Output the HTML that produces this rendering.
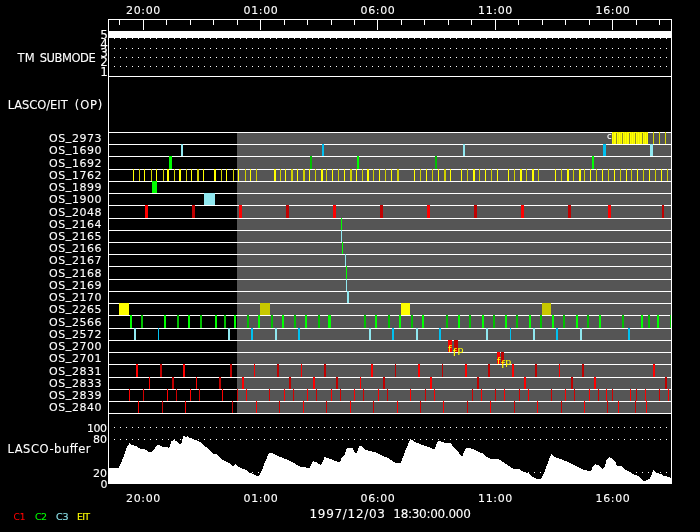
<!DOCTYPE html>
<html><head><meta charset="utf-8"><title>LASCO/EIT plan</title>
<style>
html,body{margin:0;padding:0;background:#000;}
body{width:700px;height:532px;overflow:hidden;}
svg text{stroke-width:0.1px;}svg{display:block;will-change:transform;font-family:'DejaVu Sans','Liberation Sans',sans-serif;}
</style></head><body>
<svg width="700" height="532" viewBox="0 0 700 532" shape-rendering="crispEdges">
<rect x="0" y="0" width="700" height="532" fill="#000"/>
<rect x="237" y="132" width="434" height="282" fill="#555555"/>
<rect x="108" y="132" width="563" height="1" fill="#fff"/>
<rect x="108" y="144" width="563" height="1" fill="#fff"/>
<rect x="108" y="156" width="563" height="1" fill="#fff"/>
<rect x="108" y="169" width="563" height="1" fill="#fff"/>
<rect x="108" y="181" width="563" height="1" fill="#fff"/>
<rect x="108" y="193" width="563" height="1" fill="#fff"/>
<rect x="108" y="205" width="563" height="1" fill="#fff"/>
<rect x="108" y="218" width="563" height="1" fill="#fff"/>
<rect x="108" y="230" width="563" height="1" fill="#fff"/>
<rect x="108" y="242" width="563" height="1" fill="#fff"/>
<rect x="108" y="254" width="563" height="1" fill="#fff"/>
<rect x="108" y="266" width="563" height="1" fill="#fff"/>
<rect x="108" y="279" width="563" height="1" fill="#fff"/>
<rect x="108" y="291" width="563" height="1" fill="#fff"/>
<rect x="108" y="303" width="563" height="1" fill="#fff"/>
<rect x="108" y="315" width="563" height="1" fill="#fff"/>
<rect x="108" y="328" width="563" height="1" fill="#fff"/>
<rect x="108" y="340" width="563" height="1" fill="#fff"/>
<rect x="108" y="352" width="563" height="1" fill="#fff"/>
<rect x="108" y="364" width="563" height="1" fill="#fff"/>
<rect x="108" y="377" width="563" height="1" fill="#fff"/>
<rect x="108" y="389" width="563" height="1" fill="#fff"/>
<rect x="108" y="401" width="563" height="1" fill="#fff"/>
<rect x="108" y="413" width="563" height="1" fill="#fff"/>
<rect x="108" y="19" width="564" height="1" fill="#fff"/>
<rect x="108" y="76" width="564" height="1" fill="#fff"/>
<rect x="108" y="31" width="563" height="7" fill="#fff"/>
<line x1="114" y1="38.5" x2="668" y2="38.5" stroke="#fff" stroke-width="1" stroke-dasharray="1 5"/>
<line x1="114" y1="48.5" x2="668" y2="48.5" stroke="#fff" stroke-width="1" stroke-dasharray="1 5"/>
<line x1="114" y1="57.5" x2="668" y2="57.5" stroke="#fff" stroke-width="1" stroke-dasharray="1 5"/>
<line x1="114" y1="66.5" x2="668" y2="66.5" stroke="#fff" stroke-width="1" stroke-dasharray="1 5"/>
<rect x="119" y="19" width="1" height="6" fill="#fff"/>
<rect x="143" y="19" width="1" height="11" fill="#fff"/>
<rect x="166" y="19" width="1" height="6" fill="#fff"/>
<rect x="190" y="19" width="1" height="6" fill="#fff"/>
<rect x="213" y="19" width="1" height="6" fill="#fff"/>
<rect x="237" y="19" width="1" height="6" fill="#fff"/>
<rect x="260" y="19" width="1" height="11" fill="#fff"/>
<rect x="284" y="19" width="1" height="6" fill="#fff"/>
<rect x="307" y="19" width="1" height="6" fill="#fff"/>
<rect x="331" y="19" width="1" height="6" fill="#fff"/>
<rect x="354" y="19" width="1" height="6" fill="#fff"/>
<rect x="377" y="19" width="1" height="11" fill="#fff"/>
<rect x="401" y="19" width="1" height="6" fill="#fff"/>
<rect x="424" y="19" width="1" height="6" fill="#fff"/>
<rect x="448" y="19" width="1" height="6" fill="#fff"/>
<rect x="471" y="19" width="1" height="6" fill="#fff"/>
<rect x="495" y="19" width="1" height="11" fill="#fff"/>
<rect x="518" y="19" width="1" height="6" fill="#fff"/>
<rect x="542" y="19" width="1" height="6" fill="#fff"/>
<rect x="565" y="19" width="1" height="6" fill="#fff"/>
<rect x="589" y="19" width="1" height="6" fill="#fff"/>
<rect x="612" y="19" width="1" height="11" fill="#fff"/>
<rect x="636" y="19" width="1" height="6" fill="#fff"/>
<rect x="659" y="19" width="1" height="6" fill="#fff"/>
<rect x="612" y="132" width="36" height="12" fill="#ffff00"/>
<rect x="616" y="133" width="1" height="11" fill="#8c8c28"/>
<rect x="622" y="133" width="1" height="11" fill="#8c8c28"/>
<rect x="629" y="133" width="1" height="11" fill="#8c8c28"/>
<rect x="635" y="133" width="1" height="11" fill="#8c8c28"/>
<rect x="642" y="133" width="1" height="11" fill="#8c8c28"/>
<rect x="613" y="132" width="1" height="12" fill="#ecec00"/>
<rect x="618" y="132" width="1" height="12" fill="#ecec00"/>
<rect x="620" y="132" width="1" height="12" fill="#ecec00"/>
<rect x="624" y="132" width="1" height="12" fill="#ecec00"/>
<rect x="626" y="132" width="1" height="12" fill="#ecec00"/>
<rect x="631" y="132" width="1" height="12" fill="#ecec00"/>
<rect x="633" y="132" width="1" height="12" fill="#ecec00"/>
<rect x="637" y="132" width="1" height="12" fill="#ecec00"/>
<rect x="639" y="132" width="1" height="12" fill="#ecec00"/>
<rect x="644" y="132" width="1" height="12" fill="#ecec00"/>
<rect x="646" y="132" width="1" height="12" fill="#ecec00"/>
<rect x="653" y="132" width="1" height="12" fill="#d8d800"/>
<rect x="659" y="132" width="1" height="12" fill="#d8d800"/>
<rect x="665" y="132" width="1" height="12" fill="#d8d800"/>
<rect x="181" y="144" width="2" height="12" fill="#90e8f0"/>
<rect x="322" y="144" width="2" height="12" fill="#00c0f0"/>
<rect x="463" y="144" width="2" height="12" fill="#90e8f0"/>
<rect x="603" y="144" width="3" height="12" fill="#00c0f0"/>
<rect x="650" y="144" width="3" height="12" fill="#90e8f0"/>
<rect x="169" y="156" width="3" height="13" fill="#00ff00"/>
<rect x="310" y="156" width="2" height="13" fill="#00c000"/>
<rect x="357" y="156" width="2" height="13" fill="#00ff00"/>
<rect x="435" y="156" width="2" height="13" fill="#00c000"/>
<rect x="592" y="156" width="2" height="13" fill="#00ff00"/>
<rect x="133" y="169" width="1" height="12" fill="#ffff00"/>
<rect x="139" y="169" width="1" height="12" fill="#d0d000"/>
<rect x="144" y="169" width="1" height="12" fill="#ffff00"/>
<rect x="151" y="169" width="1" height="12" fill="#d0d000"/>
<rect x="156" y="169" width="1" height="12" fill="#ffff00"/>
<rect x="163" y="169" width="1" height="12" fill="#d0d000"/>
<rect x="167" y="169" width="2" height="12" fill="#ffff00"/>
<rect x="174" y="169" width="1" height="12" fill="#d0d000"/>
<rect x="179" y="169" width="2" height="12" fill="#ffff00"/>
<rect x="186" y="169" width="1" height="12" fill="#d0d000"/>
<rect x="191" y="169" width="1" height="12" fill="#ffff00"/>
<rect x="197" y="169" width="2" height="12" fill="#d0d000"/>
<rect x="203" y="169" width="1" height="12" fill="#ffff00"/>
<rect x="214" y="169" width="2" height="12" fill="#ffff00"/>
<rect x="221" y="169" width="1" height="12" fill="#d0d000"/>
<rect x="226" y="169" width="1" height="12" fill="#ffff00"/>
<rect x="233" y="169" width="1" height="12" fill="#d0d000"/>
<rect x="238" y="169" width="1" height="12" fill="#ffff00"/>
<rect x="245" y="169" width="1" height="12" fill="#d0d000"/>
<rect x="250" y="169" width="1" height="12" fill="#ffff00"/>
<rect x="256" y="169" width="1" height="12" fill="#d0d000"/>
<rect x="274" y="169" width="2" height="12" fill="#ffff00"/>
<rect x="280" y="169" width="1" height="12" fill="#d0d000"/>
<rect x="285" y="169" width="1" height="12" fill="#ffff00"/>
<rect x="291" y="169" width="2" height="12" fill="#d0d000"/>
<rect x="297" y="169" width="1" height="12" fill="#ffff00"/>
<rect x="303" y="169" width="2" height="12" fill="#d0d000"/>
<rect x="309" y="169" width="1" height="12" fill="#ffff00"/>
<rect x="315" y="169" width="1" height="12" fill="#d0d000"/>
<rect x="321" y="169" width="2" height="12" fill="#ffff00"/>
<rect x="326" y="169" width="1" height="12" fill="#d0d000"/>
<rect x="332" y="169" width="1" height="12" fill="#ffff00"/>
<rect x="338" y="169" width="1" height="12" fill="#d0d000"/>
<rect x="344" y="169" width="1" height="12" fill="#ffff00"/>
<rect x="350" y="169" width="2" height="12" fill="#d0d000"/>
<rect x="356" y="169" width="1" height="12" fill="#ffff00"/>
<rect x="362" y="169" width="1" height="12" fill="#d0d000"/>
<rect x="367" y="169" width="2" height="12" fill="#ffff00"/>
<rect x="373" y="169" width="1" height="12" fill="#d0d000"/>
<rect x="379" y="169" width="1" height="12" fill="#ffff00"/>
<rect x="385" y="169" width="1" height="12" fill="#d0d000"/>
<rect x="391" y="169" width="1" height="12" fill="#ffff00"/>
<rect x="397" y="169" width="2" height="12" fill="#d0d000"/>
<rect x="414" y="169" width="1" height="12" fill="#ffff00"/>
<rect x="420" y="169" width="1" height="12" fill="#d0d000"/>
<rect x="426" y="169" width="1" height="12" fill="#ffff00"/>
<rect x="432" y="169" width="1" height="12" fill="#d0d000"/>
<rect x="438" y="169" width="1" height="12" fill="#ffff00"/>
<rect x="444" y="169" width="2" height="12" fill="#d0d000"/>
<rect x="450" y="169" width="1" height="12" fill="#ffff00"/>
<rect x="461" y="169" width="1" height="12" fill="#ffff00"/>
<rect x="467" y="169" width="1" height="12" fill="#d0d000"/>
<rect x="473" y="169" width="2" height="12" fill="#ffff00"/>
<rect x="479" y="169" width="1" height="12" fill="#d0d000"/>
<rect x="485" y="169" width="1" height="12" fill="#ffff00"/>
<rect x="491" y="169" width="1" height="12" fill="#d0d000"/>
<rect x="497" y="169" width="1" height="12" fill="#ffff00"/>
<rect x="508" y="169" width="1" height="12" fill="#ffff00"/>
<rect x="514" y="169" width="1" height="12" fill="#d0d000"/>
<rect x="520" y="169" width="2" height="12" fill="#ffff00"/>
<rect x="526" y="169" width="1" height="12" fill="#d0d000"/>
<rect x="532" y="169" width="2" height="12" fill="#ffff00"/>
<rect x="538" y="169" width="1" height="12" fill="#d0d000"/>
<rect x="555" y="169" width="1" height="12" fill="#ffff00"/>
<rect x="561" y="169" width="1" height="12" fill="#d0d000"/>
<rect x="567" y="169" width="2" height="12" fill="#ffff00"/>
<rect x="573" y="169" width="1" height="12" fill="#d0d000"/>
<rect x="579" y="169" width="2" height="12" fill="#ffff00"/>
<rect x="584" y="169" width="1" height="12" fill="#d0d000"/>
<rect x="590" y="169" width="1" height="12" fill="#ffff00"/>
<rect x="596" y="169" width="1" height="12" fill="#d0d000"/>
<rect x="602" y="169" width="1" height="12" fill="#ffff00"/>
<rect x="608" y="169" width="1" height="12" fill="#d0d000"/>
<rect x="614" y="169" width="1" height="12" fill="#ffff00"/>
<rect x="620" y="169" width="1" height="12" fill="#d0d000"/>
<rect x="626" y="169" width="1" height="12" fill="#ffff00"/>
<rect x="631" y="169" width="1" height="12" fill="#d0d000"/>
<rect x="637" y="169" width="1" height="12" fill="#ffff00"/>
<rect x="643" y="169" width="1" height="12" fill="#d0d000"/>
<rect x="649" y="169" width="1" height="12" fill="#ffff00"/>
<rect x="655" y="169" width="1" height="12" fill="#d0d000"/>
<rect x="661" y="169" width="1" height="12" fill="#ffff00"/>
<rect x="667" y="169" width="1" height="12" fill="#d0d000"/>
<rect x="152" y="181" width="5" height="12" fill="#00ff00"/>
<rect x="204" y="193" width="11" height="12" fill="#90e8f0"/>
<rect x="145" y="205" width="3" height="13" fill="#ff0000"/>
<rect x="192" y="205" width="3" height="13" fill="#c00000"/>
<rect x="239" y="205" width="3" height="13" fill="#ff0000"/>
<rect x="286" y="205" width="3" height="13" fill="#c00000"/>
<rect x="333" y="205" width="3" height="13" fill="#ff0000"/>
<rect x="380" y="205" width="3" height="13" fill="#c00000"/>
<rect x="427" y="205" width="3" height="13" fill="#ff0000"/>
<rect x="474" y="205" width="3" height="13" fill="#c00000"/>
<rect x="521" y="205" width="3" height="13" fill="#ff0000"/>
<rect x="568" y="205" width="3" height="13" fill="#c00000"/>
<rect x="608" y="205" width="3" height="13" fill="#ff0000"/>
<rect x="662" y="205" width="2" height="13" fill="#c00000"/>
<rect x="341" y="218" width="1" height="12" fill="#00ff00"/>
<rect x="341" y="230" width="1" height="12" fill="#90e8f0"/>
<rect x="342" y="242" width="1" height="12" fill="#00ff00"/>
<rect x="345" y="254" width="1" height="12" fill="#90e8f0"/>
<rect x="346" y="266" width="1" height="13" fill="#00ff00"/>
<rect x="346" y="279" width="1" height="12" fill="#90e8f0"/>
<rect x="347" y="291" width="2" height="12" fill="#90e8f0"/>
<rect x="119" y="303" width="10" height="12" fill="#ffff00"/>
<rect x="260" y="303" width="10" height="12" fill="#c8c800"/>
<rect x="401" y="303" width="9" height="12" fill="#ffff00"/>
<rect x="542" y="303" width="9" height="12" fill="#c8c800"/>
<rect x="130" y="315" width="2" height="13" fill="#00ff00"/>
<rect x="141" y="315" width="2" height="13" fill="#00c000"/>
<rect x="164" y="315" width="2" height="13" fill="#00ff00"/>
<rect x="177" y="315" width="2" height="13" fill="#00c000"/>
<rect x="188" y="315" width="2" height="13" fill="#00ff00"/>
<rect x="200" y="315" width="2" height="13" fill="#00c000"/>
<rect x="215" y="315" width="2" height="13" fill="#00ff00"/>
<rect x="224" y="315" width="2" height="13" fill="#00c000"/>
<rect x="234" y="315" width="2" height="13" fill="#00ff00"/>
<rect x="247" y="315" width="2" height="13" fill="#00c000"/>
<rect x="258" y="315" width="2" height="13" fill="#00ff00"/>
<rect x="271" y="315" width="2" height="13" fill="#00c000"/>
<rect x="282" y="315" width="2" height="13" fill="#00ff00"/>
<rect x="294" y="315" width="2" height="13" fill="#00c000"/>
<rect x="305" y="315" width="2" height="13" fill="#00ff00"/>
<rect x="318" y="315" width="2" height="13" fill="#00c000"/>
<rect x="328" y="315" width="3" height="13" fill="#00ff00"/>
<rect x="364" y="315" width="2" height="13" fill="#00c000"/>
<rect x="375" y="315" width="2" height="13" fill="#00ff00"/>
<rect x="388" y="315" width="2" height="13" fill="#00c000"/>
<rect x="399" y="315" width="2" height="13" fill="#00ff00"/>
<rect x="411" y="315" width="2" height="13" fill="#00c000"/>
<rect x="422" y="315" width="2" height="13" fill="#00ff00"/>
<rect x="446" y="315" width="2" height="13" fill="#00c000"/>
<rect x="458" y="315" width="2" height="13" fill="#00ff00"/>
<rect x="469" y="315" width="2" height="13" fill="#00c000"/>
<rect x="482" y="315" width="2" height="13" fill="#00ff00"/>
<rect x="493" y="315" width="2" height="13" fill="#00c000"/>
<rect x="505" y="315" width="2" height="13" fill="#00ff00"/>
<rect x="516" y="315" width="2" height="13" fill="#00c000"/>
<rect x="529" y="315" width="2" height="13" fill="#00ff00"/>
<rect x="540" y="315" width="2" height="13" fill="#00c000"/>
<rect x="552" y="315" width="2" height="13" fill="#00ff00"/>
<rect x="563" y="315" width="2" height="13" fill="#00c000"/>
<rect x="576" y="315" width="2" height="13" fill="#00ff00"/>
<rect x="587" y="315" width="2" height="13" fill="#00c000"/>
<rect x="599" y="315" width="2" height="13" fill="#00ff00"/>
<rect x="622" y="315" width="2" height="13" fill="#00c000"/>
<rect x="641" y="315" width="2" height="13" fill="#00ff00"/>
<rect x="648" y="315" width="2" height="13" fill="#00c000"/>
<rect x="657" y="315" width="2" height="13" fill="#00ff00"/>
<rect x="670" y="315" width="1" height="13" fill="#00c000"/>
<rect x="134" y="328" width="2" height="12" fill="#90e8f0"/>
<rect x="158" y="328" width="1" height="12" fill="#00c0f0"/>
<rect x="228" y="328" width="2" height="12" fill="#90e8f0"/>
<rect x="251" y="328" width="2" height="12" fill="#00c0f0"/>
<rect x="275" y="328" width="2" height="12" fill="#90e8f0"/>
<rect x="298" y="328" width="2" height="12" fill="#00c0f0"/>
<rect x="369" y="328" width="2" height="12" fill="#90e8f0"/>
<rect x="392" y="328" width="2" height="12" fill="#00c0f0"/>
<rect x="416" y="328" width="2" height="12" fill="#90e8f0"/>
<rect x="439" y="328" width="2" height="12" fill="#00c0f0"/>
<rect x="486" y="328" width="2" height="12" fill="#90e8f0"/>
<rect x="510" y="328" width="1" height="12" fill="#00c0f0"/>
<rect x="533" y="328" width="2" height="12" fill="#90e8f0"/>
<rect x="556" y="328" width="2" height="12" fill="#00c0f0"/>
<rect x="580" y="328" width="2" height="12" fill="#90e8f0"/>
<rect x="628" y="328" width="2" height="12" fill="#00c0f0"/>
<rect x="448" y="340" width="4" height="12" fill="#ff0000"/>
<rect x="454" y="340" width="4" height="12" fill="#c00000"/>
<rect x="497" y="352" width="3" height="12" fill="#ff0000"/>
<rect x="501" y="352" width="3" height="12" fill="#c00000"/>
<rect x="136" y="364" width="2" height="13" fill="#ff0000"/>
<rect x="160" y="364" width="2" height="13" fill="#c00000"/>
<rect x="183" y="364" width="2" height="13" fill="#ff0000"/>
<rect x="230" y="364" width="2" height="13" fill="#c00000"/>
<rect x="254" y="364" width="1" height="13" fill="#ff0000"/>
<rect x="277" y="364" width="2" height="13" fill="#c00000"/>
<rect x="301" y="364" width="1" height="13" fill="#ff0000"/>
<rect x="324" y="364" width="2" height="13" fill="#c00000"/>
<rect x="371" y="364" width="2" height="13" fill="#ff0000"/>
<rect x="395" y="364" width="1" height="13" fill="#c00000"/>
<rect x="418" y="364" width="2" height="13" fill="#ff0000"/>
<rect x="442" y="364" width="1" height="13" fill="#c00000"/>
<rect x="465" y="364" width="2" height="13" fill="#ff0000"/>
<rect x="488" y="364" width="2" height="13" fill="#c00000"/>
<rect x="512" y="364" width="2" height="13" fill="#ff0000"/>
<rect x="535" y="364" width="2" height="13" fill="#c00000"/>
<rect x="559" y="364" width="1" height="13" fill="#ff0000"/>
<rect x="582" y="364" width="2" height="13" fill="#c00000"/>
<rect x="653" y="364" width="2" height="13" fill="#ff0000"/>
<rect x="149" y="377" width="1" height="12" fill="#ff0000"/>
<rect x="172" y="377" width="2" height="12" fill="#c00000"/>
<rect x="196" y="377" width="1" height="12" fill="#ff0000"/>
<rect x="219" y="377" width="2" height="12" fill="#c00000"/>
<rect x="242" y="377" width="2" height="12" fill="#ff0000"/>
<rect x="289" y="377" width="2" height="12" fill="#c00000"/>
<rect x="313" y="377" width="2" height="12" fill="#ff0000"/>
<rect x="336" y="377" width="2" height="12" fill="#c00000"/>
<rect x="360" y="377" width="1" height="12" fill="#ff0000"/>
<rect x="383" y="377" width="2" height="12" fill="#c00000"/>
<rect x="430" y="377" width="2" height="12" fill="#ff0000"/>
<rect x="477" y="377" width="2" height="12" fill="#c00000"/>
<rect x="524" y="377" width="2" height="12" fill="#ff0000"/>
<rect x="571" y="377" width="2" height="12" fill="#c00000"/>
<rect x="594" y="377" width="2" height="12" fill="#ff0000"/>
<rect x="665" y="377" width="2" height="12" fill="#c00000"/>
<rect x="129" y="389" width="1" height="12" fill="#ff0000"/>
<rect x="143" y="389" width="1" height="12" fill="#d00000"/>
<rect x="167" y="389" width="1" height="12" fill="#ff0000"/>
<rect x="176" y="389" width="1" height="12" fill="#d00000"/>
<rect x="190" y="389" width="1" height="12" fill="#ff0000"/>
<rect x="199" y="389" width="1" height="12" fill="#d00000"/>
<rect x="222" y="389" width="1" height="12" fill="#ff0000"/>
<rect x="237" y="389" width="1" height="12" fill="#d00000"/>
<rect x="246" y="389" width="1" height="12" fill="#ff0000"/>
<rect x="269" y="389" width="1" height="12" fill="#d00000"/>
<rect x="284" y="389" width="1" height="12" fill="#ff0000"/>
<rect x="293" y="389" width="1" height="12" fill="#d00000"/>
<rect x="307" y="389" width="1" height="12" fill="#ff0000"/>
<rect x="316" y="389" width="1" height="12" fill="#d00000"/>
<rect x="331" y="389" width="1" height="12" fill="#ff0000"/>
<rect x="340" y="389" width="1" height="12" fill="#d00000"/>
<rect x="354" y="389" width="1" height="12" fill="#ff0000"/>
<rect x="363" y="389" width="1" height="12" fill="#d00000"/>
<rect x="378" y="389" width="1" height="12" fill="#ff0000"/>
<rect x="387" y="389" width="1" height="12" fill="#d00000"/>
<rect x="410" y="389" width="1" height="12" fill="#ff0000"/>
<rect x="425" y="389" width="1" height="12" fill="#d00000"/>
<rect x="434" y="389" width="1" height="12" fill="#ff0000"/>
<rect x="472" y="389" width="1" height="12" fill="#d00000"/>
<rect x="481" y="389" width="1" height="12" fill="#ff0000"/>
<rect x="495" y="389" width="1" height="12" fill="#d00000"/>
<rect x="504" y="389" width="1" height="12" fill="#ff0000"/>
<rect x="519" y="389" width="1" height="12" fill="#d00000"/>
<rect x="528" y="389" width="1" height="12" fill="#ff0000"/>
<rect x="551" y="389" width="1" height="12" fill="#d00000"/>
<rect x="565" y="389" width="1" height="12" fill="#ff0000"/>
<rect x="574" y="389" width="1" height="12" fill="#d00000"/>
<rect x="589" y="389" width="1" height="12" fill="#ff0000"/>
<rect x="598" y="389" width="1" height="12" fill="#d00000"/>
<rect x="606" y="389" width="1" height="12" fill="#ff0000"/>
<rect x="612" y="389" width="1" height="12" fill="#d00000"/>
<rect x="630" y="389" width="1" height="12" fill="#ff0000"/>
<rect x="636" y="389" width="1" height="12" fill="#d00000"/>
<rect x="645" y="389" width="1" height="12" fill="#ff0000"/>
<rect x="659" y="389" width="1" height="12" fill="#d00000"/>
<rect x="668" y="389" width="1" height="12" fill="#ff0000"/>
<rect x="138" y="401" width="1" height="12" fill="#ff0000"/>
<rect x="162" y="401" width="1" height="12" fill="#d00000"/>
<rect x="185" y="401" width="1" height="12" fill="#ff0000"/>
<rect x="232" y="401" width="1" height="12" fill="#d00000"/>
<rect x="256" y="401" width="1" height="12" fill="#ff0000"/>
<rect x="279" y="401" width="1" height="12" fill="#d00000"/>
<rect x="303" y="401" width="1" height="12" fill="#ff0000"/>
<rect x="326" y="401" width="1" height="12" fill="#d00000"/>
<rect x="350" y="401" width="1" height="12" fill="#ff0000"/>
<rect x="373" y="401" width="1" height="12" fill="#d00000"/>
<rect x="397" y="401" width="1" height="12" fill="#ff0000"/>
<rect x="420" y="401" width="1" height="12" fill="#d00000"/>
<rect x="443" y="401" width="1" height="12" fill="#ff0000"/>
<rect x="467" y="401" width="1" height="12" fill="#d00000"/>
<rect x="490" y="401" width="1" height="12" fill="#ff0000"/>
<rect x="514" y="401" width="1" height="12" fill="#d00000"/>
<rect x="537" y="401" width="1" height="12" fill="#ff0000"/>
<rect x="561" y="401" width="1" height="12" fill="#d00000"/>
<rect x="584" y="401" width="1" height="12" fill="#ff0000"/>
<rect x="607" y="401" width="1" height="12" fill="#d00000"/>
<rect x="618" y="401" width="1" height="12" fill="#ff0000"/>
<rect x="635" y="401" width="1" height="12" fill="#d00000"/>
<rect x="646" y="401" width="1" height="12" fill="#ff0000"/>
<line x1="114" y1="427.5" x2="668" y2="427.5" stroke="#fff" stroke-width="1" stroke-dasharray="1 5"/>
<line x1="114" y1="439.5" x2="668" y2="439.5" stroke="#fff" stroke-width="1" stroke-dasharray="1 5"/>
<line x1="114" y1="472.5" x2="668" y2="472.5" stroke="#fff" stroke-width="1" stroke-dasharray="1 5"/>
<polygon points="108,484 108,467.6 109,467.6 118.6,467.6 121,463 124,456 127,447 129.4,443.4 132,445 137,446.6 139,448.4 144,449 148,451.4 151.4,452.4 154,449.4 157,445.4 159.4,445 162,446.6 166,446.6 169,448 171.4,441 174,440 177.4,442 181,444.6 183.4,436 186,437 187.4,436 190,438 193,439 198,441 202,443.4 206,447 210,451 214,454.4 217,454 220,458 225,461 230,463.6 233,466 235,464 238,466.6 243,469 245,469.4 250,473 253,474 256,475.6 259.4,475.6 262,470 265,462 267.6,456 269.6,452.4 273,453.6 278,456 283,458 288,460 293,462.6 297,465 302,467.4 305,467 309,468.6 311,465 313,461 317,462.6 321,465.4 323,461 324.4,457 328,458 333,460 340,462.6 342,457 345,454 347,447.6 352,447.6 354,451 356.4,453.6 359,446.4 362,446.4 366,450 372,451.6 375,452 381,455 387,457.6 392,460.6 396,463.4 400.6,463 403,457 406,449 408.6,443 410.6,439 415,442 420,444 427,446.4 434.6,449.4 436,445 438,441 442,441.6 445,443.4 451,443 454,448 459,453 462.4,456.6 464,452 466,448.4 471,448.4 477,451 483,453.6 487,457 491,459 499,459.4 503,462 508,465.4 510,466.6 513,468.6 518,468.6 523,471.4 528,473 532,476.4 537,479.4 541,478.6 544,473 547,465 549.4,458 551.4,454.4 555,457 562,459.4 569,462.6 576,466 583,469.6 591,471.6 593,466 595,464 599,465.4 603,469 605,465.7 606.4,460 609.3,457 612,458.6 615,461 617,465.7 621.4,466 625.7,470 630,472 634.3,475 638,475.7 641.4,479 644.3,481.4 647,480 650,478.6 651.4,475 653.6,470 656.4,472.9 661.4,474.3 664.3,476 669.3,477 671,478.6 671,484" fill="#fff"/>
<rect x="108" y="19" width="1" height="465" fill="#fff"/>
<rect x="671" y="19" width="1" height="465" fill="#fff"/>
<text x="126" y="14" font-size="11" text-anchor="start" fill="#fff" stroke="#fff" textLength="34.3" lengthAdjust="spacing">20:00</text>
<text x="126" y="502" font-size="11" text-anchor="start" fill="#fff" stroke="#fff" textLength="34.3" lengthAdjust="spacing">20:00</text>
<text x="243.5" y="14" font-size="11" text-anchor="start" fill="#fff" stroke="#fff" textLength="34.3" lengthAdjust="spacing">01:00</text>
<text x="243.5" y="502" font-size="11" text-anchor="start" fill="#fff" stroke="#fff" textLength="34.3" lengthAdjust="spacing">01:00</text>
<text x="360.5" y="14" font-size="11" text-anchor="start" fill="#fff" stroke="#fff" textLength="34.3" lengthAdjust="spacing">06:00</text>
<text x="360.5" y="502" font-size="11" text-anchor="start" fill="#fff" stroke="#fff" textLength="34.3" lengthAdjust="spacing">06:00</text>
<text x="478" y="14" font-size="11" text-anchor="start" fill="#fff" stroke="#fff" textLength="34.3" lengthAdjust="spacing">11:00</text>
<text x="478" y="502" font-size="11" text-anchor="start" fill="#fff" stroke="#fff" textLength="34.3" lengthAdjust="spacing">11:00</text>
<text x="595.5" y="14" font-size="11" text-anchor="start" fill="#fff" stroke="#fff" textLength="34.3" lengthAdjust="spacing">16:00</text>
<text x="595.5" y="502" font-size="11" text-anchor="start" fill="#fff" stroke="#fff" textLength="34.3" lengthAdjust="spacing">16:00</text>
<text y="62" font-size="11.5" fill="#fff" stroke="#fff"><tspan x="17.6" textLength="17.2" lengthAdjust="spacing">TM</tspan> <tspan x="39.7" textLength="56" lengthAdjust="spacing">SUBMODE</tspan></text>
<text y="109" font-size="11.5" fill="#fff" stroke="#fff"><tspan x="7.7" textLength="60" lengthAdjust="spacing">LASCO/EIT</tspan> <tspan x="74.8" textLength="27.5" lengthAdjust="spacing">(OP)</tspan></text>
<text x="107.8" y="38.5" font-size="12" text-anchor="end" fill="#fff" stroke="#fff">5</text>
<text x="107.8" y="48.0" font-size="12" text-anchor="end" fill="#fff" stroke="#fff">4</text>
<text x="107.8" y="57.0" font-size="12" text-anchor="end" fill="#fff" stroke="#fff">3</text>
<text x="107.8" y="66.0" font-size="12" text-anchor="end" fill="#fff" stroke="#fff">2</text>
<text x="107.8" y="75.5" font-size="12" text-anchor="end" fill="#fff" stroke="#fff">1</text>
<text x="49" y="142.3" font-size="11" text-anchor="start" fill="#fff" stroke="#fff" textLength="52.6" lengthAdjust="spacing">OS<tspan dy="-2">_</tspan><tspan dy="2">2973</tspan></text>
<text x="49" y="154.3" font-size="11" text-anchor="start" fill="#fff" stroke="#fff" textLength="52.6" lengthAdjust="spacing">OS<tspan dy="-2">_</tspan><tspan dy="2">1690</tspan></text>
<text x="49" y="166.8" font-size="11" text-anchor="start" fill="#fff" stroke="#fff" textLength="52.6" lengthAdjust="spacing">OS<tspan dy="-2">_</tspan><tspan dy="2">1692</tspan></text>
<text x="49" y="179.3" font-size="11" text-anchor="start" fill="#fff" stroke="#fff" textLength="52.6" lengthAdjust="spacing">OS<tspan dy="-2">_</tspan><tspan dy="2">1762</tspan></text>
<text x="49" y="191.3" font-size="11" text-anchor="start" fill="#fff" stroke="#fff" textLength="52.6" lengthAdjust="spacing">OS<tspan dy="-2">_</tspan><tspan dy="2">1899</tspan></text>
<text x="49" y="203.3" font-size="11" text-anchor="start" fill="#fff" stroke="#fff" textLength="52.6" lengthAdjust="spacing">OS<tspan dy="-2">_</tspan><tspan dy="2">1900</tspan></text>
<text x="49" y="215.8" font-size="11" text-anchor="start" fill="#fff" stroke="#fff" textLength="52.6" lengthAdjust="spacing">OS<tspan dy="-2">_</tspan><tspan dy="2">2048</tspan></text>
<text x="49" y="228.3" font-size="11" text-anchor="start" fill="#fff" stroke="#fff" textLength="52.6" lengthAdjust="spacing">OS<tspan dy="-2">_</tspan><tspan dy="2">2164</tspan></text>
<text x="49" y="240.3" font-size="11" text-anchor="start" fill="#fff" stroke="#fff" textLength="52.6" lengthAdjust="spacing">OS<tspan dy="-2">_</tspan><tspan dy="2">2165</tspan></text>
<text x="49" y="252.3" font-size="11" text-anchor="start" fill="#fff" stroke="#fff" textLength="52.6" lengthAdjust="spacing">OS<tspan dy="-2">_</tspan><tspan dy="2">2166</tspan></text>
<text x="49" y="264.3" font-size="11" text-anchor="start" fill="#fff" stroke="#fff" textLength="52.6" lengthAdjust="spacing">OS<tspan dy="-2">_</tspan><tspan dy="2">2167</tspan></text>
<text x="49" y="276.8" font-size="11" text-anchor="start" fill="#fff" stroke="#fff" textLength="52.6" lengthAdjust="spacing">OS<tspan dy="-2">_</tspan><tspan dy="2">2168</tspan></text>
<text x="49" y="289.3" font-size="11" text-anchor="start" fill="#fff" stroke="#fff" textLength="52.6" lengthAdjust="spacing">OS<tspan dy="-2">_</tspan><tspan dy="2">2169</tspan></text>
<text x="49" y="301.3" font-size="11" text-anchor="start" fill="#fff" stroke="#fff" textLength="52.6" lengthAdjust="spacing">OS<tspan dy="-2">_</tspan><tspan dy="2">2170</tspan></text>
<text x="49" y="313.3" font-size="11" text-anchor="start" fill="#fff" stroke="#fff" textLength="52.6" lengthAdjust="spacing">OS<tspan dy="-2">_</tspan><tspan dy="2">2265</tspan></text>
<text x="49" y="325.8" font-size="11" text-anchor="start" fill="#fff" stroke="#fff" textLength="52.6" lengthAdjust="spacing">OS<tspan dy="-2">_</tspan><tspan dy="2">2566</tspan></text>
<text x="49" y="338.3" font-size="11" text-anchor="start" fill="#fff" stroke="#fff" textLength="52.6" lengthAdjust="spacing">OS<tspan dy="-2">_</tspan><tspan dy="2">2572</tspan></text>
<text x="49" y="350.3" font-size="11" text-anchor="start" fill="#fff" stroke="#fff" textLength="52.6" lengthAdjust="spacing">OS<tspan dy="-2">_</tspan><tspan dy="2">2700</tspan></text>
<text x="49" y="362.3" font-size="11" text-anchor="start" fill="#fff" stroke="#fff" textLength="52.6" lengthAdjust="spacing">OS<tspan dy="-2">_</tspan><tspan dy="2">2701</tspan></text>
<text x="49" y="374.8" font-size="11" text-anchor="start" fill="#fff" stroke="#fff" textLength="52.6" lengthAdjust="spacing">OS<tspan dy="-2">_</tspan><tspan dy="2">2831</tspan></text>
<text x="49" y="387.3" font-size="11" text-anchor="start" fill="#fff" stroke="#fff" textLength="52.6" lengthAdjust="spacing">OS<tspan dy="-2">_</tspan><tspan dy="2">2833</tspan></text>
<text x="49" y="399.3" font-size="11" text-anchor="start" fill="#fff" stroke="#fff" textLength="52.6" lengthAdjust="spacing">OS<tspan dy="-2">_</tspan><tspan dy="2">2839</tspan></text>
<text x="49" y="411.3" font-size="11" text-anchor="start" fill="#fff" stroke="#fff" textLength="52.6" lengthAdjust="spacing">OS<tspan dy="-2">_</tspan><tspan dy="2">2840</tspan></text>
<text x="87" y="431.5" font-size="11" text-anchor="start" fill="#fff" stroke="#fff" textLength="20" lengthAdjust="spacing">100</text>
<text x="93" y="442.8" font-size="11" text-anchor="start" fill="#fff" stroke="#fff" textLength="14" lengthAdjust="spacing">80</text>
<text x="93" y="476.5" font-size="11" text-anchor="start" fill="#fff" stroke="#fff" textLength="14" lengthAdjust="spacing">20</text>
<text x="100.5" y="487.8" font-size="11" text-anchor="start" fill="#fff" stroke="#fff">0</text>
<text x="7.5" y="452.5" font-size="11.5" text-anchor="start" fill="#fff" stroke="#fff" textLength="83" lengthAdjust="spacing">LASCO-buffer</text>
<text y="518" font-size="12" fill="#fff" stroke="#fff"><tspan x="309.5" textLength="75.5" lengthAdjust="spacing">1997/12/03</tspan> <tspan x="393.3" textLength="77.5" lengthAdjust="spacing">18:30:00.000</tspan></text>
<text x="13.5" y="520" font-size="9" text-anchor="start" fill="#ff0000" stroke="#ff0000">C1</text>
<text x="35" y="520" font-size="9.5" text-anchor="start" fill="#00ff00" stroke="#00ff00" textLength="12" lengthAdjust="spacing">C2</text>
<text x="56" y="520" font-size="9.5" text-anchor="start" fill="#90e8f0" stroke="#90e8f0" textLength="12.5" lengthAdjust="spacing">C3</text>
<text x="77" y="520" font-size="9.5" text-anchor="start" fill="#ffff00" stroke="#ffff00" textLength="13" lengthAdjust="spacing">EIT</text>
<text x="607" y="139" font-size="8.5" text-anchor="start" fill="#fff" stroke="#fff">c</text>
<text x="448" y="352" font-size="9.5" text-anchor="start" fill="#ffff00" stroke="#ffff00" textLength="4" lengthAdjust="spacing">f</text>
<text x="452.8" y="356" font-size="11" text-anchor="start" fill="#ffff00" stroke="#ffff00" textLength="4.2" lengthAdjust="spacing">f</text>
<text x="457.6" y="352.7" font-size="9.5" text-anchor="start" fill="#ffff00" stroke="#ffff00">p</text>
<text x="497" y="364" font-size="9.5" text-anchor="start" fill="#ffff00" stroke="#ffff00" textLength="4" lengthAdjust="spacing">f</text>
<text x="501.0" y="368" font-size="11" text-anchor="start" fill="#ffff00" stroke="#ffff00" textLength="4.2" lengthAdjust="spacing">f</text>
<text x="505.32000000000005" y="364.7" font-size="9.5" text-anchor="start" fill="#ffff00" stroke="#ffff00">p</text>
</svg>
</body></html>
